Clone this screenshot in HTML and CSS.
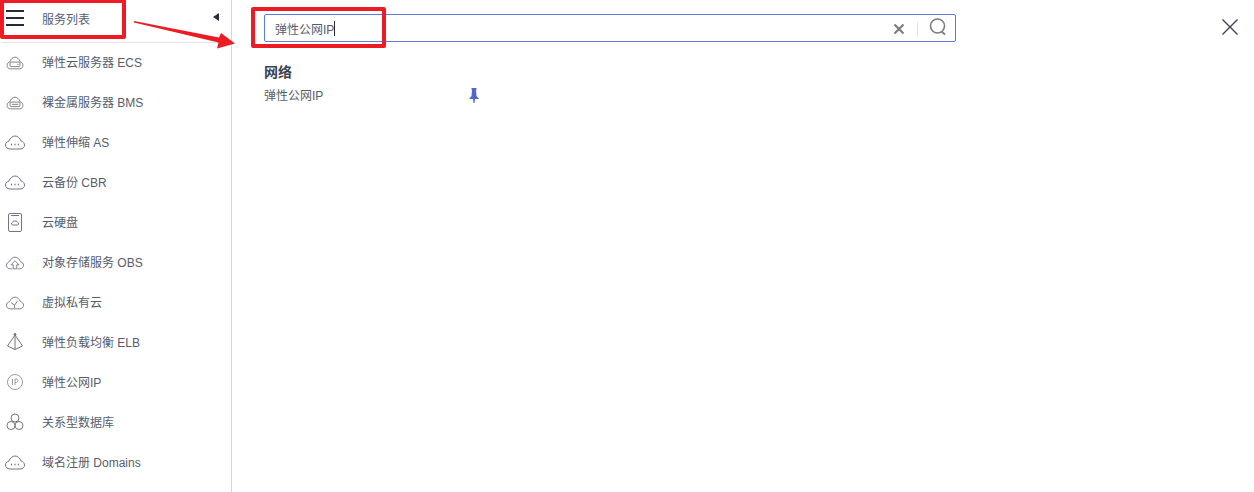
FILE: index.html
```html
<!DOCTYPE html>
<html lang="zh">
<head>
<meta charset="utf-8">
<title>服务列表</title>
<link rel="stylesheet" href="styles.css">
</head>
<body>
<div class="page">
  <aside class="sidebar">
    <header class="side-head">
      <svg class="burger" width="20" height="18" viewBox="0 0 20 18"><path d="M1 2h18M1 9h18M1 16h18" stroke="#252b3a" stroke-width="2" fill="none"/></svg>
      <span class="side-title">服务列表</span>
      <span class="collapse"></span>
    </header>
    <ul class="menu">
      <li class="item">
        <svg class="ico cloud narrow" width="18" height="14" viewBox="0 0 20 15"><path d="M5 14h10c2.800 0 3.800-2 3.800-3.800 0-2-1.300-3.500-3-3.900C15 3.300 12.500 1 10 1S5 3.300 4.200 6.300c-1.700.4-3 1.900-3 3.900C1.200 12 2.200 14 5 14z"/><rect x="4.500" y="6.500" width="11" height="5" rx="1"/><path d="M12.500 9h1.500"/></svg>
        <span>弹性云服务器 ECS</span>
      </li>
      <li class="item">
        <svg class="ico cloud narrow" width="18" height="14" viewBox="0 0 20 15"><path d="M5 14h10c2.800 0 3.800-2 3.800-3.800 0-2-1.300-3.500-3-3.900C15 3.300 12.500 1 10 1S5 3.300 4.200 6.300c-1.700.4-3 1.900-3 3.900C1.200 12 2.200 14 5 14z"/><rect x="4.500" y="6.500" width="11" height="5" rx="1"/><path d="M6.500 9h7"/></svg>
        <span>裸金属服务器 BMS</span>
      </li>
      <li class="item">
        <svg class="ico cloud" width="20" height="15" viewBox="0 0 20 15"><path d="M5 14h10c3 0 4.500-2 4.500-4 0-2-1.500-3.500-3.500-4C15 3 12.500 1 10 1S5 3 4 6C2 6.500.5 8 .5 10c0 2 1.500 4 4.500 4z"/><path d="M6 9.500h1.200M9.400 9.500h1.200M12.800 9.500H14" class="dots"/></svg>
        <span>弹性伸缩 AS</span>
      </li>
      <li class="item">
        <svg class="ico cloud" width="20" height="15" viewBox="0 0 20 15"><path d="M5 14h10c3 0 4.500-2 4.500-4 0-2-1.500-3.500-3.500-4C15 3 12.500 1 10 1S5 3 4 6C2 6.500.5 8 .5 10c0 2 1.500 4 4.500 4z"/><path d="M6 9.500h1.200M9.400 9.500h1.200M12.800 9.500H14" class="dots"/></svg>
        <span>云备份 CBR</span>
      </li>
      <li class="item">
        <svg class="ico shape" width="20" height="19" viewBox="0 0 20 19"><rect x="3.500" y=".5" width="13" height="18" rx="1.500"/><path d="M6 2.500h8M7.500 12h5c1.500 0 1.500-2.500 0-2.700C12 7.500 8 7.500 7.500 9.300c-1.300.3-1.300 2.700 0 2.700z"/></svg>
        <span>云硬盘</span>
      </li>
      <li class="item">
        <svg class="ico cloud narrow" width="18" height="14" viewBox="0 0 20 15"><path d="M7 14H5c-3 0-4.500-2-4.500-4 0-2 1.500-3.500 3.500-4C5 3 7.500 1 10 1s5 2 6 5c2 .5 3.500 2 3.500 4 0 2-1.500 4-4.500 4h-2"/><path d="M5.500 9.500L10 5l4.500 4.500H12V14H8V9.500z"/></svg>
        <span>对象存储服务 OBS</span>
      </li>
      <li class="item">
        <svg class="ico cloud narrow" width="18" height="14" viewBox="0 0 20 15"><path d="M5 14h10c3 0 4.500-2 4.500-4 0-2-1.500-3.500-3.500-4C15 3 12.500 1 10 1S5 3 4 6C2 6.500.5 8 .5 10c0 2 1.500 4 4.500 4z"/><path d="M5.500 7l4 3 3.500-5M9.500 10v3"/></svg>
        <span>虚拟私有云</span>
      </li>
      <li class="item">
        <svg class="ico shape" width="20" height="18" viewBox="0 0 20 18"><path d="M10 2L2.500 13l7.500 3.500 7.500-3.500zM10 2v14.500"/><circle cx="10" cy="1.500" r="1" class="dot"/></svg>
        <span>弹性负载均衡 ELB</span>
      </li>
      <li class="item">
        <svg class="ico shape pale" width="20" height="16" viewBox="0 0 20 16"><circle cx="10" cy="8" r="7.500"/><path d="M7.500 5v6M10 11V5h1.500c2 0 2 3.500 0 3.500H10"/></svg>
        <span>弹性公网IP</span>
      </li>
      <li class="item">
        <svg class="ico shape" width="20" height="18" viewBox="0 0 20 18"><circle cx="10" cy="5" r="4"/><circle cx="6" cy="12.500" r="4"/><circle cx="14" cy="12.500" r="4"/></svg>
        <span>关系型数据库</span>
      </li>
      <li class="item">
        <svg class="ico cloud" width="20" height="15" viewBox="0 0 20 15"><path d="M5 14h10c3 0 4.500-2 4.500-4 0-2-1.500-3.500-3.500-4C15 3 12.500 1 10 1S5 3 4 6C2 6.500.5 8 .5 10c0 2 1.500 4 4.500 4z"/><path d="M6 9.500h1.200M9.400 9.500h1.200M12.800 9.500H14" class="dots"/></svg>
        <span>域名注册 Domains</span>
      </li>
    </ul>
  </aside>
  <main class="content">
    <div class="top-row">
      <div class="search">
        <span class="search-text">弹性公网IP<i class="caret"></i></span>
        <svg class="clear" width="12" height="12" viewBox="0 0 12 12"><path d="M1.500 1.500l9 9M10.500 1.500l-9 9" stroke="#7d7d7d" stroke-width="2.200" fill="none"/></svg>
        <span class="divider"></span>
        <svg class="glass" width="18" height="18" viewBox="0 0 18 18"><circle cx="8.500" cy="8" r="7" fill="none" stroke="#7d7d7d" stroke-width="1.600"/><path d="M12.500 13.500l3.500 3" stroke="#7d7d7d" stroke-width="1.700" fill="none"/></svg>
      </div>
      <svg class="close" width="16" height="16" viewBox="0 0 16 16"><path d="M.5.500l15 15M15.500.500l-15 15" stroke="#3b4250" stroke-width="1.400" fill="none"/></svg>
    </div>
    <section class="results">
      <h2 class="group">网络</h2>
      <div class="result">
        <span class="result-name">弹性公网IP</span>
        <svg class="pin" width="10" height="15" viewBox="0 0 10 15"><path d="M2.500 0h5v1.500L7 2l.5 6L10 11H6l-.5 4h-1L4 11H0l2.500-3L3 2l-.5-.5z" fill="#4d6ac8"/></svg>
      </div>
    </section>
  </main>
</div>
<div class="mark mark-a"></div>
<div class="mark mark-b"></div>
<svg class="arrow" width="104" height="30" viewBox="0 0 104 30"><path d="M0 0L85 16.500 87 12 101 22.500 83 27.500 84.500 21.500 0 1.500z" fill="#ec1c24"/></svg>
</body>
</html>
```
FILE: styles.css
```css
* { box-sizing: border-box; }
html, body { margin: 0; padding: 0; background: #fff; }
body { font-family: "Liberation Sans", "Noto Sans CJK SC", sans-serif; font-size: 12px; color: #575d6c; overflow: hidden; }
.page { display: flex; width: 1254px; height: 492px; }
.sidebar { width: 232px; flex: none; border-right: 1px solid #d5d5d5; }
.side-head { height: 43px; margin-left: 2px; display: flex; align-items: center; padding: 0 12px 6px 3px; border-bottom: 1px solid #dfe1e6; }
.burger { flex: none; }
.side-title { margin-left: 17px; flex: 1; color: #575d6c; }
.collapse { width: 0; height: 0; border-style: solid; border-width: 4.500px 6px 4.500px 0; border-color: transparent #252b3a transparent transparent; margin-top: -2px; }
.menu { list-style: none; margin: -2px 0 0; padding: 0; }
.item { height: 40px; display: flex; align-items: center; padding-left: 5px; color: #575d6c; }
.item span { margin-left: 17px; }
.ico { flex: none; fill: none; stroke: #72767f; stroke-width: 1; }
.cloud { margin-top: 3px; }
.narrow { margin-left: 1px; margin-right: 1px; }
.shape { margin-top: 2px; }
.pale { stroke: #9a9da5; }
.ico .dot { fill: #72767f; }
.ico .dots { stroke-width: 1.300; }
.content { flex: 1; padding: 14px 0 0 32px; min-width: 0; }
.top-row { display: flex; align-items: center; }
.search { width: 692px; height: 28px; border: 1px solid #5e7ce0; border-radius: 2px; display: flex; align-items: center; padding: 0 8px 0 10px; }
.search-text { flex: 1; color: #575d6c; display: flex; align-items: center; }
.caret { display: inline-block; width: 1px; height: 15px; background: #252b3a; }
.clear { flex: none; margin-top: 2px; }
.divider { width: 1px; height: 15px; background: #dfe1e6; margin: 2px 11px 0 12px; }
.glass { flex: none; margin-top: -3px; }
.close { margin: -3px 0 0 266px; flex: none; }
.results { padding-top: 22px; }
.group { margin: 0; font-size: 14px; line-height: 16px; font-weight: bold; color: #3c4250; }
.result { width: 215px; display: flex; align-items: center; justify-content: space-between; margin-top: 7px; height: 15px; }
.pin { flex: none; margin-top: 2px; }
.mark { position: absolute; border: 4px solid #ec1c24; border-radius: 2px; }
.mark-a { left: 0; top: -1px; width: 126px; height: 40px; }
.mark-b { left: 251px; top: 7px; width: 135px; height: 41px; }
.arrow { position: absolute; left: 134px; top: 21px; }
```
